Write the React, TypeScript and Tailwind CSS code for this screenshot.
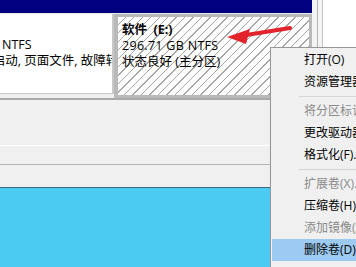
import React from 'react'

type Item = { label: string; disabled?: boolean; active?: boolean } | 'sep'

const items: Item[] = [
  { label: '打开(O)' },
  { label: '资源管理器(E)' },
  'sep',
  { label: '将分区标记为活动分区(M)', disabled: true },
  { label: '更改驱动器号和路径(C)...' },
  { label: '格式化(F)...' },
  'sep',
  { label: '扩展卷(X)...', disabled: true },
  { label: '压缩卷(H)...' },
  { label: '添加镜像(A)...', disabled: true },
  { label: '删除卷(D)...', active: true },
]

function ContextMenu() {
  return (
    <div className="absolute left-[270px] top-[47px] w-[140px] h-[230px] bg-[#f0f0f0] border border-[#979797] shadow-[2px_2px_3px_rgba(0,0,0,0.3)] py-[1px]">
      {items.map((it, i) =>
        it === 'sep' ? (
          <div key={i} className="h-[7px] flex items-center pl-[28px] pr-[2px]">
            <div className="h-px w-full bg-[#d5d5d5]" />
          </div>
        ) : (
          <div
            key={i}
            className={
              'mx-[1px] h-[22px] flex items-center pl-[32px] whitespace-nowrap text-[12px] ' +
              (it.active ? 'bg-[#9dcaf0] ' : '') +
              (it.disabled ? 'text-[#8a8a8a]' : 'text-[#000]')
            }
          >
            {it.label}
          </div>
        )
      )}
    </div>
  )
}

export default function App() {
  return (
    <div
      className="relative w-[356px] h-[267px] overflow-hidden bg-[#f0f0f0] text-[12px] leading-[16px] text-black"
      style={{ fontFamily: '"Open Sans", "Noto Sans CJK SC", sans-serif' }}
    >
      {/* 上部：磁盘分区 */}
      <div className="flex h-[100px] border-b-2 border-[#a9a9a9]">
        <div className="w-[312px] flex flex-col">
          <div className="h-[13px] bg-[#000080]" />
          <div className="flex flex-1 border-t border-[#e8e8e8] text-[12.5px]">
            <div className="w-[114px] h-[80px] bg-white border-r-2 border-[#c8c8c8] border-b border-b-[#c8c8c8] overflow-hidden pt-[7px] pl-[2px] whitespace-nowrap">
              <div className="h-[16px]" />
              <div>NTFS</div>
              <div className="ml-[-13px]">(启动, 页面文件, 故障转储, 主分区)</div>
            </div>
            <div className="flex-1 border-[3px] border-[#b9b9b9] border-l-[4px] bg-[repeating-linear-gradient(135deg,#ffffff_0_5px,#a6a6a6_5px_6px)] overflow-hidden pl-[4px] pt-[5px] whitespace-nowrap">
              <div className="font-bold">软件&nbsp;&nbsp;(E:)</div>
              <div className="tracking-[0.3px]">296.71 GB NTFS</div>
              <div>状态良好 (主分区)</div>
            </div>
          </div>
        </div>
        <div className="w-[6px] bg-[#f4f4f4] border-r border-[#b4b4b4]" />
        <div className="w-[5px] bg-[#f4f4f4] border-r border-[#c4c4c4]" />
        <div className="flex-1 bg-white" />
      </div>

      {/* 中部：空白区域 */}
      <div className="h-[45px]" />
      <div className="h-px bg-white" />
      <div className="h-[18px]" />
      <div className="h-px bg-[#b4b4b4]" />
      <div className="h-[22px]" />
      <div className="h-px bg-[#3a6b82]" />
      <div className="h-[80px] bg-[#4bcbf2]" />

      {/* 红色箭头 */}
      <svg className="absolute left-0 top-0" width="356" height="267">
        <line x1="240" y1="36" x2="290" y2="28" stroke="#e3232b" strokeWidth="4" strokeLinecap="round" />
        <polygon points="227,37 250,29 246,44" fill="#e3232b" />
      </svg>

      <ContextMenu />
    </div>
  )
}
